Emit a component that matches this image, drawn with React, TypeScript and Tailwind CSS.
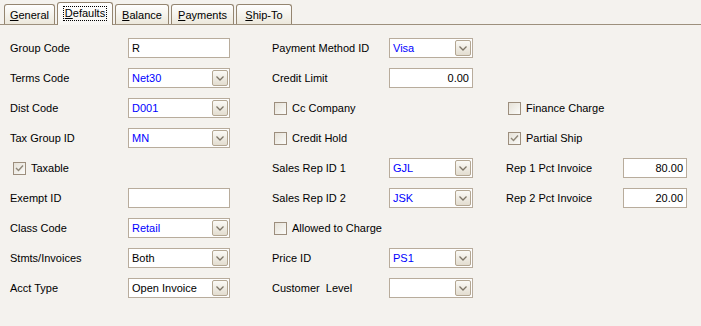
import React from 'react';

const font = { fontFamily: '"Liberation Sans", Arial, sans-serif' };

function Tab({ label, w, active }: { label: string; w: number; active?: boolean }) {
  const first = label[0];
  const rest = label.slice(1);
  return (
    <div
      className={
        active
          ? 'relative -mb-px flex h-[23px] items-start justify-center rounded-t-[3px] border border-b-0 border-[#948570] bg-gradient-to-b from-[#fefefe] to-[#f7f6f2] pt-[3px] text-[11px] text-black'
          : 'flex h-[20px] items-start justify-center rounded-t-[3px] border border-b-0 border-[#948570] bg-gradient-to-b from-[#fefefe] to-[#ece8dc] pt-[3px] text-[11px] text-black'
      }
      style={{ width: w }}
    >
      <span className={active ? 'border border-dotted border-black px-px leading-[13px]' : 'leading-[14px]'}>
        <span className="underline">{first}</span>
        {rest}
      </span>
    </div>
  );
}

function TextBox({ value = '', w, right, blue }: { value?: string; w: number; right?: boolean; blue?: boolean }) {
  return (
    <div
      className={`flex h-[20px] items-center border border-[#b8ac9c] bg-white px-[3px] text-[11px] ${right ? 'justify-end' : 'justify-start'} ${blue ? 'text-[#0000ff]' : 'text-black'}`}
      style={{ width: w }}
    >
      {value}
    </div>
  );
}

function Combo({ value = '', w, blue }: { value?: string; w: number; blue?: boolean }) {
  return (
    <div
      className="flex h-[20px] items-center justify-between border border-[#b8ac9c] bg-white pl-[3px] pr-px text-[11px]"
      style={{ width: w }}
    >
      <span className={blue ? 'text-[#0000ff]' : 'text-black'}>{value}</span>
      <div className="flex h-[16px] w-[16px] items-center justify-center rounded-[2px] border border-[#b3a692] bg-gradient-to-b from-[#fbfaf6] to-[#e3ddd0]">
        <svg width="8" height="5" viewBox="0 0 8 5">
          <path d="M0.5 0.5 L4 4 L7.5 0.5" fill="none" stroke="#7d7566" strokeWidth="1.3" />
        </svg>
      </div>
    </div>
  );
}

function Check({ label, checked }: { label: string; checked?: boolean }) {
  return (
    <div className="flex items-center gap-[5px] text-[11px] text-black">
      <div className="flex h-[13px] w-[13px] items-center justify-center border border-[#9c8e7d] bg-gradient-to-br from-[#e6e2d8] to-[#fbfbf9]">
        {checked && (
          <svg width="9" height="8" viewBox="0 0 9 8">
            <path d="M1 4 L3.5 6.5 L8 1.5" fill="none" stroke="#8f8778" strokeWidth="1.4" />
          </svg>
        )}
      </div>
      <span>{label}</span>
    </div>
  );
}

function Field({ label, lw, children }: { label: string; lw: number; children: React.ReactNode }) {
  return (
    <div className="flex items-center text-[11px] text-black">
      <span className="shrink-0 whitespace-pre" style={{ width: lw }}>
        {label}
      </span>
      {children}
    </div>
  );
}

export default function App() {
  const c1 = 'w-[262px] flex items-center';
  const c2 = 'w-[234px] flex items-center';
  const c3 = 'flex-1 flex items-center';

  return (
    <div className="h-[326px] w-[701px] overflow-hidden bg-[#f4f2ee]" style={font}>
      {/* tab strip */}
      <div className="flex h-[25px] items-end gap-[2px] border-b border-[#9d907d] pl-[4px]">
        <Tab label="General" w={51} />
        <Tab label="Defaults" w={56} active />
        <Tab label="Balance" w={54} />
        <Tab label="Payments" w={63} />
        <Tab label="Ship-To" w={56} />
      </div>

      <div className="flex flex-col pl-[10px] pt-[8px]">
        <div className="flex h-[30px]">
          <div className={c1}>
            <Field label="Group Code" lw={118}><TextBox value="R" w={102} /></Field>
          </div>
          <div className={c2}>
            <Field label="Payment Method ID" lw={117}><Combo value="Visa" w={84} blue /></Field>
          </div>
          <div className={c3} />
        </div>

        <div className="flex h-[30px]">
          <div className={c1}>
            <Field label="Terms Code" lw={118}><Combo value="Net30" w={102} blue /></Field>
          </div>
          <div className={c2}>
            <Field label="Credit Limit" lw={117}><TextBox value="0.00" w={84} right /></Field>
          </div>
          <div className={c3} />
        </div>

        <div className="flex h-[30px]">
          <div className={c1}>
            <Field label="Dist Code" lw={118}><Combo value="D001" w={102} blue /></Field>
          </div>
          <div className={`${c2} pl-[2px]`}>
            <Check label="Cc Company" />
          </div>
          <div className={`${c3} pl-[2px]`}>
            <Check label="Finance Charge" />
          </div>
        </div>

        <div className="flex h-[30px]">
          <div className={c1}>
            <Field label="Tax Group ID" lw={118}><Combo value="MN" w={102} blue /></Field>
          </div>
          <div className={`${c2} pl-[2px]`}>
            <Check label="Credit Hold" />
          </div>
          <div className={`${c3} pl-[2px]`}>
            <Check label="Partial Ship" checked />
          </div>
        </div>

        <div className="flex h-[30px]">
          <div className={`${c1} pl-[3px]`}>
            <Check label="Taxable" checked />
          </div>
          <div className={c2}>
            <Field label="Sales Rep ID 1" lw={117}><Combo value="GJL" w={84} blue /></Field>
          </div>
          <div className={c3}>
            <Field label="Rep 1 Pct Invoice" lw={117}><TextBox value="80.00" w={64} right /></Field>
          </div>
        </div>

        <div className="flex h-[30px]">
          <div className={c1}>
            <Field label="Exempt ID" lw={118}><TextBox w={102} /></Field>
          </div>
          <div className={c2}>
            <Field label="Sales Rep ID 2" lw={117}><Combo value="JSK" w={84} blue /></Field>
          </div>
          <div className={c3}>
            <Field label="Rep 2 Pct Invoice" lw={117}><TextBox value="20.00" w={64} right /></Field>
          </div>
        </div>

        <div className="flex h-[30px]">
          <div className={c1}>
            <Field label="Class Code" lw={118}><Combo value="Retail" w={102} blue /></Field>
          </div>
          <div className={`${c2} pl-[2px]`}>
            <Check label="Allowed to Charge" />
          </div>
          <div className={c3} />
        </div>

        <div className="flex h-[30px]">
          <div className={c1}>
            <Field label="Stmts/Invoices" lw={118}><Combo value="Both" w={102} /></Field>
          </div>
          <div className={c2}>
            <Field label="Price ID" lw={117}><Combo value="PS1" w={84} blue /></Field>
          </div>
          <div className={c3} />
        </div>

        <div className="flex h-[30px]">
          <div className={c1}>
            <Field label="Acct Type" lw={118}><Combo value="Open Invoice" w={102} /></Field>
          </div>
          <div className={c2}>
            <Field label="Customer  Level" lw={117}><Combo w={84} /></Field>
          </div>
          <div className={c3} />
        </div>
      </div>
    </div>
  );
}
